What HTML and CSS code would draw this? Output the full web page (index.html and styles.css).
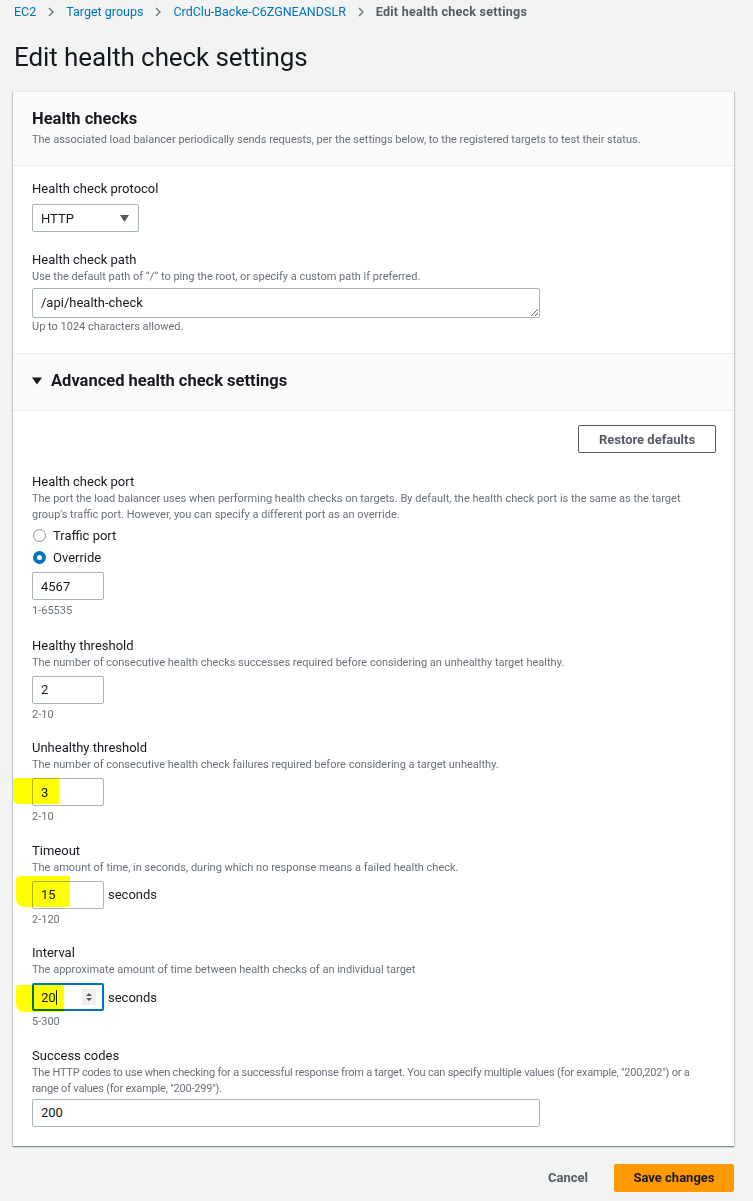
FILE: index.html
```html
<!DOCTYPE html>
<html lang="en">
<head>
<meta charset="utf-8">
<title>Edit health check settings</title>
<link rel="stylesheet" href="styles.css">
</head>
<body>
<div class="page">
  <nav class="breadcrumb">
    <a class="crumb">EC2</a>
    <span class="sep"><svg width="8" height="10" viewBox="0 0 8 10"><path d="M2 1l4 4-4 4" fill="none" stroke="#687078" stroke-width="1.3"/></svg></span>
    <a class="crumb">Target groups</a>
    <span class="sep"><svg width="8" height="10" viewBox="0 0 8 10"><path d="M2 1l4 4-4 4" fill="none" stroke="#687078" stroke-width="1.3"/></svg></span>
    <a class="crumb">CrdClu-Backe-C6ZGNEANDSLR</a>
    <span class="sep"><svg width="8" height="10" viewBox="0 0 8 10"><path d="M2 1l4 4-4 4" fill="none" stroke="#687078" stroke-width="1.3"/></svg></span>
    <span class="crumb current">Edit health check settings</span>
  </nav>

  <h1 class="title">Edit health check settings</h1>

  <div class="panel">
    <div class="panel-header">
      <h2 class="panel-title">Health checks</h2>
      <p class="desc">The associated load balancer periodically sends requests, per the settings below, to the registered targets to test their status.</p>
    </div>

    <div class="section">
      <div class="field first">
        <div class="label">Health check protocol</div>
        <div class="select">
          <span>HTTP</span>
          <svg class="caret" width="9" height="7" viewBox="0 0 9 7"><path d="M0 0h9L4.5 7z" fill="#545b64"/></svg>
        </div>
      </div>
      <div class="field path">
        <div class="label">Health check path</div>
        <div class="desc">Use the default path of “/“ to ping the root, or specify a custom path if preferred.</div>
        <textarea class="textarea" rows="1">/api/health-check</textarea>
        <div class="constraint tight">Up to 1024 characters allowed.</div>
      </div>
    </div>

    <div class="expander">
      <svg class="expander-icon" width="10" height="8" viewBox="0 0 10 8"><path d="M0 0.5h10L5 7.5z" fill="#16191f"/></svg>
      <span class="expander-title">Advanced health check settings</span>
    </div>

    <div class="section advanced">
      <div class="actions-row">
        <button class="btn-normal">Restore defaults</button>
      </div>

      <div class="field port">
        <div class="label">Health check port</div>
        <div class="desc">The port the load balancer uses when performing health checks on targets. By default, the health check port is the same as the target group's traffic port. However, you can specify a different port as an override.</div>
        <div class="radios">
          <div class="radio"><span class="radio-dot"></span><span>Traffic port</span></div>
          <div class="radio"><span class="radio-dot checked"></span><span>Override</span></div>
        </div>
        <div class="input-row"><div class="input small">4567</div></div>
        <div class="constraint">1-65535</div>
      </div>

      <div class="field healthy">
        <div class="label">Healthy threshold</div>
        <div class="desc">The number of consecutive health checks successes required before considering an unhealthy target healthy.</div>
        <div class="input-row"><div class="input small">2</div></div>
        <div class="constraint">2-10</div>
      </div>

      <div class="field">
        <div class="label">Unhealthy threshold</div>
        <div class="desc">The number of consecutive health check failures required before considering a target unhealthy.</div>
        <div class="input-row">
          <div class="input small">3</div>
          <span class="marker m1"></span>
        </div>
        <div class="constraint">2-10</div>
      </div>

      <div class="field">
        <div class="label">Timeout</div>
        <div class="desc">The amount of time, in seconds, during which no response means a failed health check.</div>
        <div class="input-row">
          <div class="input small">15</div>
          <span class="unit">seconds</span>
          <span class="marker m2"></span>
        </div>
        <div class="constraint">2-120</div>
      </div>

      <div class="field">
        <div class="label">Interval</div>
        <div class="desc">The approximate amount of time between health checks of an individual target</div>
        <div class="input-row">
          <div class="input small focused"><span>20</span><span class="cursor"></span><span class="spinner"><svg width="8" height="12" viewBox="0 0 8 12"><path d="M1 5L4 2l3 3z M1 7l3 3 3-3z" fill="#545b64"/></svg></span></div>
          <span class="unit">seconds</span>
          <span class="marker m3"></span>
        </div>
        <div class="constraint">5-300</div>
      </div>

      <div class="field success">
        <div class="label">Success codes</div>
        <div class="desc narrow">The HTTP codes to use when checking for a successful response from a target. You can specify multiple values (for example, "200,202") or a range of values (for example, "200-299").</div>
        <div class="input-row"><div class="input wide">200</div></div>
      </div>
    </div>
  </div>

  <div class="footer">
    <button class="btn-link">Cancel</button>
    <button class="btn-primary">Save changes</button>
  </div>
</div>
</body>
</html>
```

FILE: styles.css
```css
* { box-sizing: border-box; }

body {
  margin: 0;
  background: #f2f3f3;
  font-family: Roboto, "Liberation Sans", sans-serif;
  color: #16191f;
}

.page {
  padding: 0 19px 0 13px;
}

.breadcrumb {
  height: 24px;
  display: flex;
  align-items: center;
  padding-left: 1px;
  font-size: 12.5px;
  line-height: 16px;
}

.crumb {
  color: #0073bb;
  text-decoration: none;
}

.crumb.current {
  color: #545b64;
  font-weight: 700;
  letter-spacing: 0.25px;
}

.sep {
  width: 30px;
  display: flex;
  justify-content: center;
  align-items: center;
}

.title {
  margin: 16px 0 0 1px;
  font-size: 26px;
  line-height: 34px;
  font-weight: 400;
  letter-spacing: -0.1px;
  color: #16191f;
}

.panel {
  margin-top: 17px;
  background: #fff;
  border-top: 1px solid #eaeded;
  box-shadow: 0 1px 1px 0 rgba(0, 28, 36, 0.3), 1px 1px 1px 0 rgba(0, 28, 36, 0.15), -1px 1px 1px 0 rgba(0, 28, 36, 0.15);
}

.panel-header {
  background: #fafafa;
  padding: 17px 18px 17px 19px;
  border-bottom: 1px solid #eaeded;
}

.panel-title {
  margin: 0;
  font-size: 16.5px;
  line-height: 20px;
  font-weight: 700;
}

.panel-header .desc {
  margin: 3px 0 0;
}

.desc {
  font-size: 11px;
  line-height: 16px;
  color: #687078;
  letter-spacing: 0;
}

.desc.narrow {
  letter-spacing: -0.2px;
}

.section {
  padding: 14px 18px 19px 19px;
}

.section.advanced {
  padding-top: 14px;
  padding-bottom: 19px;
}

.field {
  margin-top: 16.5px;
}

.field.first {
  margin-top: 0;
}

.field.path {
  margin-top: 19px;
}

.field.port {
  margin-top: 20px;
}

.field.healthy {
  margin-top: 17.5px;
}

.label {
  font-size: 13px;
  line-height: 18px;
  color: #16191f;
}

.select {
  margin-top: 6px;
  width: 107px;
  height: 28px;
  border: 1px solid #aab7b8;
  border-radius: 2px;
  background: #fff;
  display: flex;
  align-items: center;
  justify-content: space-between;
  padding: 0 9px 0 8px;
  font-size: 13px;
}

.textarea {
  display: block;
  margin-top: 3px;
  width: 508px;
  height: 30px;
  min-height: 30px;
  border: 1px solid #aab7b8;
  border-radius: 2px;
  padding: 5px 8px;
  font-family: Roboto, "Liberation Sans", sans-serif;
  font-size: 13px;
  line-height: 18px;
  color: #16191f;
  resize: vertical;
  overflow: hidden;
}

.constraint {
  margin-top: 3px;
  font-size: 11px;
  line-height: 16px;
  color: #687078;
}

.constraint.tight {
  margin-top: 1px;
}

.expander {
  background: #fafafa;
  border-top: 1px solid #eaeded;
  border-bottom: 1px solid #eaeded;
  padding: 17px 19px 19px 19px;
  display: flex;
  align-items: center;
  gap: 9px;
  margin-top: -1px;
}

.expander-title {
  font-size: 16.5px;
  line-height: 20px;
  font-weight: 700;
}

.actions-row {
  display: flex;
  justify-content: flex-end;
}

.btn-normal {
  width: 138px;
  height: 28px;
  border: 1px solid #545b64;
  border-radius: 2px;
  background: #fff;
  color: #545b64;
  font-family: Roboto, "Liberation Sans", sans-serif;
  font-weight: 700;
  font-size: 13px;
  padding: 0;
}

.radios {
  margin-top: 2px;
  display: flex;
  flex-direction: column;
  gap: 2px;
}

.radio {
  height: 20px;
  display: flex;
  align-items: center;
  gap: 7px;
  font-size: 13px;
  padding-left: 1px;
}

.radio-dot {
  width: 13px;
  height: 13px;
  border-radius: 50%;
  border: 1px solid #879596;
  background: #fff;
}

.radio-dot.checked {
  border: 4px solid #0073bb;
  background: #fff;
}

.input-row {
  position: relative;
  margin-top: 5px;
  display: flex;
  align-items: center;
  gap: 4px;
}

.success .input-row {
  margin-top: 2px;
}

.input {
  height: 28px;
  border: 1px solid #aab7b8;
  border-radius: 2px;
  background: #fff;
  padding: 0 8px;
  display: flex;
  align-items: center;
  font-size: 13px;
  color: #16191f;
}

.input.small {
  width: 72px;
}

.input.wide {
  width: 508px;
}

.input.focused {
  border: 2px solid #0073bb;
  padding-left: 7px;
  position: relative;
}

.cursor {
  display: inline-block;
  width: 1px;
  height: 15px;
  background: #16191f;
}

.spinner {
  position: absolute;
  right: 6px;
  top: 4px;
  width: 14px;
  height: 16px;
  background: #f0f0f0;
  display: flex;
  align-items: center;
  justify-content: center;
}

.unit {
  font-size: 13px;
}

.marker {
  position: absolute;
  background: #ffff00;
  mix-blend-mode: multiply;
  pointer-events: none;
}

.m1 {
  left: -19px;
  top: 0;
  width: 46px;
  height: 26px;
  border-radius: 3px 1px 1px 6px;
}

.m2 {
  left: -16px;
  top: -5px;
  width: 54px;
  height: 31px;
  border-radius: 4px 1px 1px 8px;
}

.m3 {
  left: -16px;
  top: 2px;
  width: 48px;
  height: 27px;
  border-radius: 4px 1px 1px 8px;
}

.footer {
  margin-top: 18px;
  display: flex;
  justify-content: flex-end;
  align-items: center;
  gap: 26px;
}

.btn-link {
  background: none;
  border: none;
  padding: 0;
  font-family: Roboto, "Liberation Sans", sans-serif;
  font-weight: 700;
  font-size: 13px;
  color: #545b64;
  height: 28px;
}

.btn-primary {
  width: 120px;
  height: 28px;
  border: none;
  border-radius: 2px;
  background: #ff9900;
  color: #16191f;
  font-family: Roboto, "Liberation Sans", sans-serif;
  font-weight: 700;
  font-size: 13px;
  padding: 0;
}
```
